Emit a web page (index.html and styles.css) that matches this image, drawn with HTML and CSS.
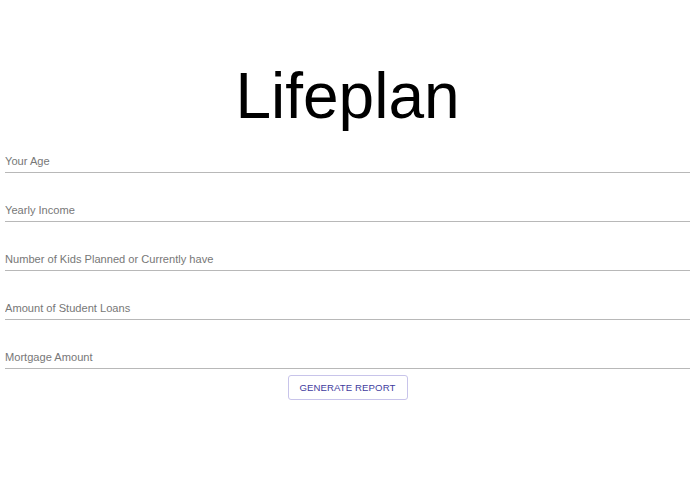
FILE: index.html
```html
<!DOCTYPE html>
<html>
<head>
<meta charset="utf-8">
<link rel="stylesheet" href="styles.css">
</head>
<body>
<div class="page">
  <h1 class="title">Lifeplan</h1>
  <form class="form">
    <input class="field" type="text" placeholder="Your Age">
    <input class="field" type="text" placeholder="Yearly Income">
    <input class="field" type="text" placeholder="Number of Kids Planned or Currently have">
    <input class="field" type="text" placeholder="Amount of Student Loans">
    <input class="field" type="text" placeholder="Mortgage Amount">
    <div class="actions">
      <button class="btn" type="button">GENERATE REPORT</button>
    </div>
  </form>
</div>
</body>
</html>
```
FILE: styles.css
```css
html, body {
  margin: 0;
  padding: 0;
  background: #ffffff;
}
body {
  font-family: "Liberation Sans", Arial, Helvetica, sans-serif;
}
.page {
  padding: 0 5px;
}
.title {
  margin: 59px 0 0;
  font-size: 64px;
  line-height: 74px;
  font-weight: 400;
  text-align: center;
  color: #000;
}
.form {
  display: flex;
  flex-direction: column;
  padding-top: 20px;
}
.field {
  display: block;
  box-sizing: border-box;
  width: 100%;
  height: 20px;
  margin: 0 0 29px;
  padding: 0 0 4px;
  border: none;
  border-bottom: 1px solid #b8b8b8;
  font-family: "Liberation Sans", Arial, sans-serif;
  font-size: 11.1px;
  line-height: 15px;
  color: #333;
  outline: none;
  background: transparent;
}
.field:last-of-type {
  margin-bottom: 6px;
}
.field::placeholder {
  color: #777777;
  opacity: 1;
}
.actions {
  display: flex;
  justify-content: center;
}
.btn {
  box-sizing: border-box;
  width: 120px;
  height: 25px;
  padding: 0;
  border: 1px solid #c8c4ea;
  border-radius: 3px;
  background: #fff;
  color: #3f3c9e;
  font-family: "Liberation Sans", Arial, sans-serif;
  font-size: 9.6px;
  letter-spacing: 0.1px;
}
```
